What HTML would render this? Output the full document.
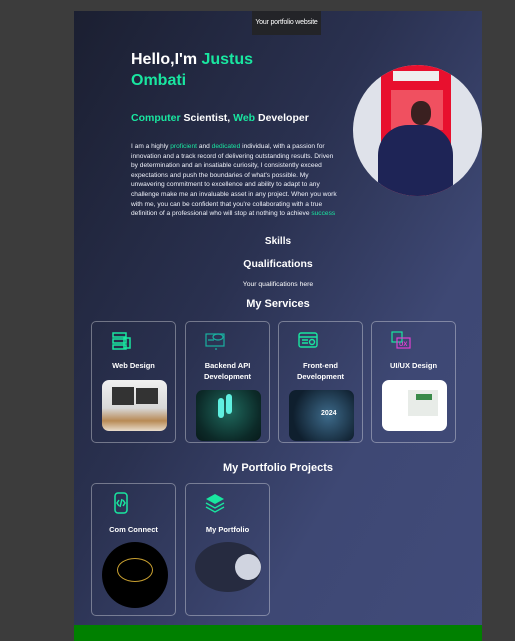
<!DOCTYPE html>
<html><head><meta charset="utf-8"><style>
*{margin:0;padding:0;box-sizing:border-box}
body{width:515px;height:641px;background:#3c3c3c;position:relative;overflow:hidden;font-family:"Liberation Sans",sans-serif;color:#fff}
.page{position:absolute;left:74px;top:11px;width:408px;height:630px;background:linear-gradient(120deg,#1b1f31 0%,#2a3150 40%,#3e4874 70%,#414b7a 100%)}
.a{position:absolute}
.g{color:#19e6a0}
.hdr{left:178px;top:0;width:69px;height:24px;background:#232428;font-size:7px;text-align:center;line-height:24px;white-space:nowrap;letter-spacing:-.2px}
h1{position:absolute;left:57px;top:38px;font-size:16px;line-height:21px;font-weight:bold}
.sub{left:57px;top:101px;font-size:10.5px;font-weight:bold}
.p{left:57px;top:131px;white-space:nowrap;font-size:6.6px;line-height:9.6px;color:#f0f2fa}
.photo{left:279px;top:54px;width:129px;height:131px;border-radius:50%;overflow:hidden;background:#dfe2ea}
.c{width:408px;text-align:center;font-weight:bold}
.card{position:absolute;width:85px;border:1px solid rgba(255,255,255,.35);border-radius:5px;text-align:center;font-size:7.5px;font-weight:bold}
.card .t{position:absolute;left:0;width:100%;top:38px;line-height:11px}
.img{position:absolute;left:10px;width:65px;border-radius:7px}
.ic{position:absolute;left:18px;top:8px}
</style></head><body>
<div class="page">
<div class="a hdr">Your portfolio website</div>
<h1>Hello,I'm <span class="g">Justus</span><br><span class="g">Ombati</span></h1>
<div class="a sub"><span class="g">Computer</span> Scientist, <span class="g">Web</span> Developer</div>
<div class="a p">I am a highly <span class="g">proficient</span> and <span class="g">dedicated</span> individual, with a passion for<br>innovation and a track record of delivering outstanding results. Driven<br>by determination and an insatiable curiosity, I consistently exceed<br>expectations and push the boundaries of what's possible. My<br>unwavering commitment to excellence and ability to adapt to any<br>challenge make me an invaluable asset in any project. When you work<br>with me, you can be confident that you're collaborating with a true<br>definition of a professional who will stop at nothing to achieve <span class="g">success</span></div>
<div class="a photo">
 <div class="a" style="left:28px;top:0;width:70px;height:131px;background:#e8102e"></div>
 <div class="a" style="left:40px;top:6px;width:46px;height:10px;background:#eee"></div>
 <div class="a" style="left:38px;top:25px;width:52px;height:40px;background:#f05060"></div>
 <div class="a" style="left:58px;top:36px;width:20px;height:24px;background:#3a2020;border-radius:45%"></div>
 <div class="a" style="left:25px;top:60px;width:75px;height:80px;background:#1e2456;border-radius:30px 30px 0 0"></div>
</div>
<div class="a c" style="top:225px;font-size:10px">Skills</div>
<div class="a c" style="top:247px;font-size:10.5px">Qualifications</div>
<div class="a c" style="top:270px;font-size:6.8px;font-weight:normal">Your qualifications here</div>
<div class="a c" style="top:287px;font-size:11px">My Services</div>

<div class="card" style="left:17px;top:310px;height:122px">
 <svg class="ic" width="22" height="22" viewBox="0 0 22 22" fill="none" stroke="#19e6a0" stroke-width="1.5"><rect x="3" y="3" width="13" height="4"/><rect x="3" y="9" width="13" height="4"/><rect x="3" y="15" width="13" height="4"/><rect x="14" y="8" width="6" height="10"/></svg>
 <div class="t">Web Design</div>
 <div class="img" style="top:58px;height:51px;background:linear-gradient(#f0f0f0 0,#d8d8d8 55%,#b88a55 80%,#e8dccc 100%)"><div class="a" style="left:10px;top:7px;width:22px;height:18px;background:#333"></div><div class="a" style="left:34px;top:8px;width:22px;height:16px;background:#333"></div></div>
</div>
<div class="card" style="left:111px;top:310px;height:122px">
 <svg class="ic" width="22" height="22" viewBox="0 0 22 22" fill="none" stroke="#19b0a0" stroke-width="1.2"><rect x="2" y="4" width="18" height="12"/><ellipse cx="14" cy="7" rx="5" ry="3"/><path d="M11 19h2M4 10h6"/></svg>
 <div class="t">Backend API<br>Development</div>
 <div class="img" style="top:68px;height:51px;background:radial-gradient(circle at 50% 40%,#1f6a5e,#0c2a28 70%,#081a1a)"><div class="a" style="left:22px;top:8px;width:6px;height:20px;background:#5ff0e0;border-radius:3px"></div><div class="a" style="left:30px;top:4px;width:6px;height:20px;background:#5ff0e0;border-radius:3px"></div></div>
</div>
<div class="card" style="left:204px;top:310px;height:122px">
 <svg class="ic" width="22" height="22" viewBox="0 0 22 22" fill="none" stroke="#19e6a0" stroke-width="1.4"><rect x="2" y="3" width="18" height="14" rx="2"/><path d="M2 7h18M5 10h6M5 13h6"/><circle cx="15" cy="12" r="2.5"/></svg>
 <div class="t">Front-end<br>Development</div>
 <div class="img" style="top:68px;height:51px;background:radial-gradient(circle at 60% 50%,#3d6a8a,#0f1f2e 75%)"><div class="a" style="left:32px;top:20px;font-size:7px">2024</div></div>
</div>
<div class="card" style="left:297px;top:310px;height:122px">
 <svg class="ic" width="22" height="22" viewBox="0 0 22 22" fill="none" stroke="#19e6a0" stroke-width="1.2"><rect x="2" y="2" width="10" height="10"/><rect x="7" y="8" width="13" height="10" stroke="#e040d0"/><text x="9" y="16" font-size="6" fill="#e040d0" stroke="none" font-family="Liberation Sans">UX</text></svg>
 <div class="t">UI/UX Design</div>
 <div class="img" style="top:58px;height:51px;background:#fff"><div class="a" style="left:26px;top:10px;width:30px;height:26px;background:#e8ece8"></div><div class="a" style="left:34px;top:14px;width:16px;height:6px;background:#3a8a4a"></div></div>
</div>

<div class="a c" style="top:451px;font-size:11px">My Portfolio Projects</div>
<div class="card" style="left:17px;top:472px;height:133px">
 <svg class="ic" width="22" height="22" viewBox="0 0 22 22" fill="none" stroke="#19e6a0" stroke-width="1.5"><rect x="5" y="1" width="12" height="20" rx="3"/><path d="M9 8l-2 3 2 3M13 8l2 3-2 3M12 7l-2 8"/></svg>
 <div class="t" style="top:40px">Com Connect</div>
 <div class="a" style="left:10px;top:58px;width:66px;height:66px;border-radius:50%;background:#000"><div class="a" style="left:15px;top:16px;width:36px;height:24px;border:1px solid #c9a030;border-radius:50%"></div></div>
</div>
<div class="card" style="left:111px;top:472px;height:133px">
 <svg class="ic" width="22" height="22" viewBox="0 0 22 22" fill="#19e6a0"><path d="M11 2l9 5-9 5-9-5z"/><path d="M2 11l9 5 9-5" fill="none" stroke="#19e6a0" stroke-width="1.4"/><path d="M2 15l9 5 9-5" fill="none" stroke="#19e6a0" stroke-width="1.4"/></svg>
 <div class="t" style="top:40px">My Portfolio</div>
 <div class="a" style="left:9px;top:58px;width:66px;height:50px;border-radius:50%;background:#262b40"><div class="a" style="left:40px;top:12px;width:26px;height:26px;border-radius:50%;background:#d0d4e0"></div></div>
</div>
<div class="a" style="left:0;top:614px;width:408px;height:16px;background:#008000"></div>
</div>
</body></html>
